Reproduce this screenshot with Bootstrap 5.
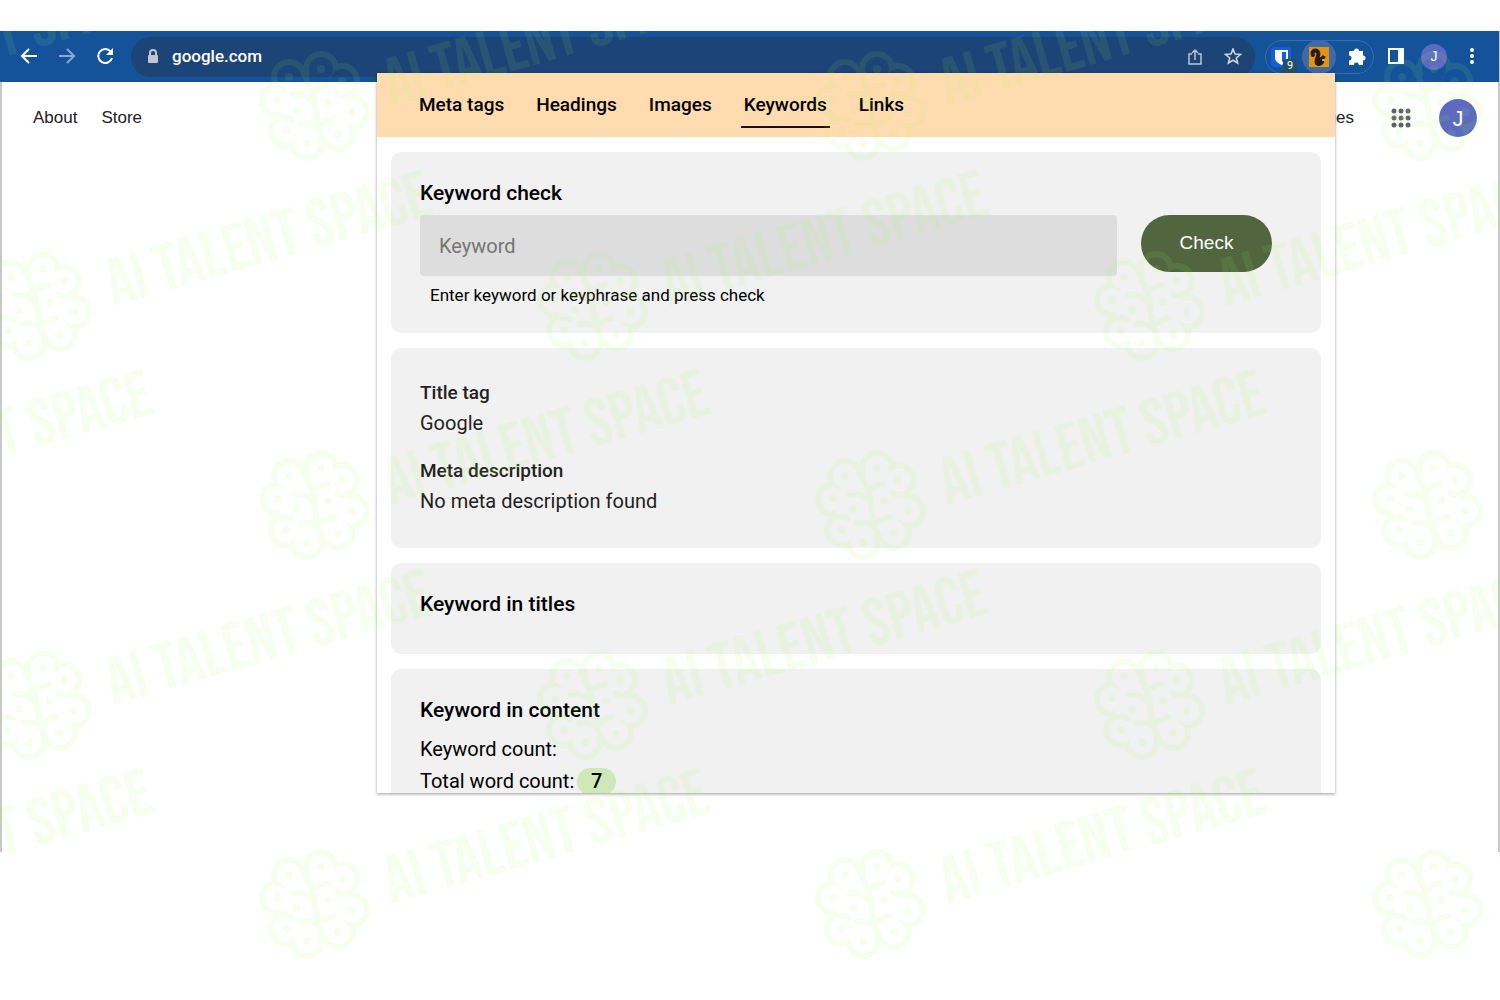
<!DOCTYPE html>
<html lang="en">
<head>
<meta charset="utf-8">
<meta name="viewport" content="width=device-width, initial-scale=1">
<title>Google</title>
<link rel="stylesheet" href="https://cdn.jsdelivr.net/npm/bootstrap@5.3.0/dist/css/bootstrap.min.css">
<style>
body{font-family:Roboto,"Liberation Sans",sans-serif;background:#fff;color:#000;overflow-x:hidden}
a{text-decoration:none;color:inherit}
.stage{padding-top:31px;min-height:100vh}
.browser{min-height:821px;border-left:2px solid #c8c8c8;border-right:2px solid #c8c8c8}
.toolbar{height:51px;margin:0 -1px 0 -2px;padding:0 14px 0 16px;background:#145399;color:#fff}
.tool{width:26px;height:26px;padding:0;border:0;background:none;color:inherit;display:inline-flex;align-items:center;justify-content:center;flex-shrink:0}
.tool-dim{opacity:.5}
.omnibox{height:40px;background:#1c4476;border-radius:20px;margin-left:13px;padding:0 9px 0 13px}
.omni-actions{gap:12px}
.address{background:none;border:0;outline:0;color:#fff;font-size:17px;font-weight:500;min-width:0;padding:0 0 0 10px}
.ext-group{height:34px;border:1px solid #3c6ca8;border-radius:17px;padding:0 3px 0 2px;margin:0 9px 0 10px}
.ext-active{width:34px;height:34px;background:#4169a4;border-radius:50%}
.ext-count{left:15px;top:15px;width:14px;height:13px;background:#24505f;border-radius:2px;font-size:11px;line-height:13px}
.user-small,.user-large{font-family:"Liberation Sans",Arial,sans-serif}
.user-small{border-radius:50%;background:#5c6bc0;font-size:14px}
.user-large{width:38px;height:38px;border-radius:50%;border:0;background:#5c6bc0;color:#fff;font-size:22px}
.site-nav{font-family:"Liberation Sans",Arial,sans-serif;font-size:17px;color:#222;padding:17px 21px 0 31px}
.apps-btn{margin:0 25px 0 34px}
.popup-panel{right:165px;top:73px;width:958px;max-width:80vw;height:720px;overflow:hidden;background:#fff;box-shadow:0 1px 3px #0006}
.tabs-bar{background:#ffdbb0;height:64px;padding:14px 39px 0}
.tab-list{gap:26px}
.tab-item{font-size:19px;font-weight:500;line-height:36px;padding:0 3px 3px;border-bottom:2px solid transparent}
.tab-item.active{border-color:#1d0d00}
.panel-body{padding:15px 14px}
.panel-box{background:#f1f1f1;border-radius:10px;padding:26px 29px;margin-bottom:15px}
.panel-box h2{font-size:21px;font-weight:500;line-height:30px;margin:0}
.titles-box{padding-bottom:35px}
.meta-box{padding:30px 29px 32px;font-size:20px;line-height:30px;color:#222}
.meta-box dl,.meta-box dd{margin:0}
.meta-box dt{font-size:19px;font-weight:500}
.meta-box dd+dt{margin-top:18px}
.field-row{margin-top:7px}
.keyword-field{height:61px;background:#ddd;border:0;border-radius:4px;padding:0 19px;font-size:20px}
.keyword-field::placeholder{color:#757575}
.check-btn{width:131px;height:57px;background:#51663f;color:#fff;border:0;border-radius:29px;font-family:"Liberation Sans",Arial,sans-serif;font-size:19px;margin-right:20px}
.hint{font-size:17px;line-height:24px;padding:7px 10px 0}
.count-line{font-size:20px;line-height:32px}
.count-pill{background:#cfe8b7;border-radius:14px;width:39px;height:27px;line-height:27px;font-weight:500;margin-left:3px}
.watermark{left:0;top:31px;width:100%;height:969px;pointer-events:none;color:#a5ff50;opacity:.09}
.watermark text{font-family:"Bebas Neue","Liberation Sans",sans-serif;font-size:67px}
</style>
</head>
<body>
<div class="stage position-relative">
 <div class="browser">
  <header class="toolbar d-flex align-items-center">
   <div class="d-flex gap-2 align-items-center">
    <button class="tool" aria-label="Back"><svg width="18" height="18" viewBox="0 0 18 18" fill="none" stroke="currentColor" stroke-width="2"><path d="M17 8H2M9 1L2 8l7 7"/></svg></button>
    <button class="tool tool-dim ms-1" aria-label="Forward"><svg width="18" height="18" viewBox="0 0 18 18" fill="none" stroke="currentColor" stroke-width="2"><path d="M1 8h15M9 1l7 7-7 7"/></svg></button>
    <button class="tool ms-1" aria-label="Reload"><svg width="18" height="18" viewBox="0 0 18 18" fill="none" stroke="currentColor" stroke-width="2"><path d="M15 4a7 7 0 1 0 1 6"/><path d="M17 0v7h-7z" fill="currentColor" stroke="none"/></svg></button>
   </div>
   <div class="omnibox d-flex align-items-center flex-grow-1">
    <svg width="18" height="18" viewBox="0 0 18 18"><rect x="4" y="7" width="10" height="8" rx="1" fill="#c0c7d2"/><path d="M6 8V5a3 3 0 0 1 6 0v3" fill="none" stroke="#c0c7d2" stroke-width="2"/></svg>
    <input class="address flex-grow-1" aria-label="Address" value="google.com">
    <div class="omni-actions d-flex">
     <button class="tool" aria-label="Share"><svg width="16" height="18" viewBox="0 0 16 18" fill="none" stroke="#b9c5d6" stroke-width="1.500"><path d="M5 6H2v10h12V6h-3M8 12V2M5 5l3-3 3 3"/></svg></button>
     <button class="tool" aria-label="Bookmark"><svg width="18" height="18" viewBox="0 0 18 18" fill="none" stroke="#cbd3df" stroke-width="1.600"><path d="M9 1l2 5 5.500.4-4.200 3.600L13.600 15 9 12.200 4.400 15l1.300-5L1.500 6.400 7 6z"/></svg></button>
    </div>
   </div>
   <div class="ext-group d-flex align-items-center gap-2">
    <button class="tool position-relative" aria-label="Password manager"><svg width="20" height="20" viewBox="0 0 20 20"><rect width="20" height="20" rx="3" fill="#175ddc"/><path d="M4 3h13v8c0 3-3 5-6.500 7C7 16 4 14 4 11z" fill="#fff"/><path d="M11 5h4v6c0 2-2 3-4 4z" fill="#175ddc"/></svg><span class="ext-count position-absolute">9</span></button>
    <button class="tool ext-active" aria-label="SEO extension"><svg width="20" height="20" viewBox="0 0 20 20"><path fill="#e0940f" d="M0 0h20v20H0z"/><path d="M4 8C2 4 7 2 9 5c2 4-3 7-1 11" fill="none" stroke="#2b1b08" stroke-width="4" stroke-linecap="round"/><path d="M7 14c1-3 3-4 5-4l2-2 1 1c2 0 2 2 0 3v3c0 2-3 4-6 4-2 0-3-3-2-5z" fill="#2b1b08"/><circle cx="14" cy="13" r="1" fill="#ddd"/></svg></button>
    <button class="tool" aria-label="Extensions"><svg width="20" height="20" viewBox="0 0 20 20" fill="#fff"><path d="M3 4h4a2.500 2.500 0 1 1 5 0h4v4.500a2.500 2.500 0 1 1 0 5V18h-4.200a2.500 2.500 0 0 0-5 0H2v-4.500a2.500 2.500 0 0 0 0-5V5z"/></svg></button>
   </div>
   <div class="d-flex align-items-center gap-2">
    <button class="tool" aria-label="Side panel"><svg width="18" height="18" viewBox="0 0 18 18"><path fill="#fff" fill-rule="evenodd" d="M1 0h16v16H1zM3 2v12h8V2z"/></svg></button>
    <button class="tool user-small ms-1" aria-label="Profile">J</button>
    <button class="tool ms-1" aria-label="Menu"><svg width="4" height="18" viewBox="0 0 4 18" fill="#fff"><circle cx="2" cy="2" r="2"/><circle cx="2" cy="8" r="2"/><circle cx="2" cy="14" r="2"/></svg></button>
   </div>
  </header>
  <nav class="site-nav d-flex align-items-center">
   <a href="#">About</a><a href="#" class="ms-4">Store</a>
   <a href="#" class="ms-auto">Images</a>
   <button class="tool apps-btn" aria-label="Google apps"><svg width="20" height="20" viewBox="0 0 20 20" fill="#5f6368"><g id="dots"><circle cx="3" cy="3" r="2.500"/><circle cx="10" cy="3" r="2.500"/><circle cx="17" cy="3" r="2.500"/></g><use href="#dots" y="7"/><use href="#dots" y="14"/></svg></button>
   <button class="user-large p-0" aria-label="Account">J</button>
  </nav>
 </div>
</div>

<section class="popup-panel position-absolute">
 <nav class="tabs-bar">
  <div class="tab-list d-flex">
   <a href="#" class="tab-item">Meta tags</a><a href="#" class="tab-item">Headings</a><a href="#" class="tab-item">Images</a><a href="#" class="tab-item active">Keywords</a><a href="#" class="tab-item">Links</a>
  </div>
 </nav>
 <div class="panel-body">
  <form class="panel-box">
   <h2><label for="keyword">Keyword check</label></h2>
   <div class="field-row d-flex gap-4 align-items-start">
    <input id="keyword" class="keyword-field flex-grow-1" placeholder="Keyword">
    <button type="button" class="check-btn">Check</button>
   </div>
   <div class="hint">Enter keyword or keyphrase and press check</div>
  </form>
  <section class="panel-box meta-box">
   <dl><dt>Title tag</dt><dd>Google</dd><dt>Meta description</dt><dd>No meta description found</dd></dl>
  </section>
  <section class="panel-box titles-box"><h2>Keyword in titles</h2></section>
  <section class="panel-box">
   <h2 class="mb-2">Keyword in content</h2>
   <div class="count-line">Keyword count:</div>
   <div class="count-line d-flex align-items-center">Total word count:<span class="count-pill text-center">7</span></div>
  </section>
 </div>
</section>

<svg class="watermark position-absolute" aria-hidden="true" fill="currentColor">
 <defs>
  <mask id="lobes" maskUnits="userSpaceOnUse" x="-60" y="-60" width="120" height="120">
   <g fill="#fff"><circle cx="-25" cy="-29" r="18"/><circle cx="7" cy="-37" r="18"/><circle cx="28" cy="-25" r="18"/><circle cx="-37" cy="-6" r="18"/><circle cx="38" cy="6" r="18"/><circle cx="-28" cy="25" r="18"/><circle cx="-7" cy="37" r="18"/><circle cx="24" cy="28" r="18"/></g>
   <g fill="#000"><ellipse rx="34" ry="31"/><circle cx="-25" cy="-29" r="12"/><circle cx="7" cy="-37" r="12"/><circle cx="28" cy="-25" r="12"/><circle cx="-37" cy="-6" r="12"/><circle cx="38" cy="6" r="12"/><circle cx="-28" cy="25" r="12"/><circle cx="-7" cy="37" r="12"/><circle cx="24" cy="28" r="12"/></g>
  </mask>
  <g id="stamp">
   <rect x="-60" y="-60" width="120" height="120" mask="url(#lobes)"/>
   <path d="M-9-36C-9-22-1-16 0-6C2 4 2 14 5 22C8 28 8 32 9 37M-21-11Q-9-13-2-4M-2-13Q2-19 13-21M-13 18Q-1 16 5 23M5 20Q12 13 20 12M-30 12Q-25 11-22 14M30-10Q26-10 23-12" fill="none" stroke="currentColor" stroke-width="6" stroke-linecap="round"/>
   <circle cx="-25" cy="-29" r="4"/><circle cx="7" cy="-37" r="4"/><circle cx="28" cy="-25" r="4"/><circle cx="-37" cy="-6" r="4"/><circle cx="-17" cy="4" r="4"/><circle cx="14" cy="-4" r="4"/><circle cx="38" cy="6" r="4"/><circle cx="-28" cy="25" r="4"/><circle cx="-7" cy="37" r="4"/><circle cx="24" cy="28" r="4"/>
   <text transform="translate(77 0) rotate(-16)">AI TALENT SPACE</text>
  </g>
  <g id="stamps"><use href="#stamp" x="-243" y="75"/><use href="#stamp" x="314" y="75"/><use href="#stamp" x="870" y="75"/><use href="#stamp" x="1427" y="75"/></g>
  <g id="stamps-shifted"><use href="#stamp" x="36" y="275"/><use href="#stamp" x="592" y="275"/><use href="#stamp" x="1149" y="275"/></g>
 </defs>
 <use href="#stamps"/><use href="#stamps" y="399"/><use href="#stamps" y="798"/>
 <use href="#stamps-shifted"/><use href="#stamps-shifted" y="399"/>
</svg>
<script src="https://cdn.jsdelivr.net/npm/bootstrap@5.3.0/dist/js/bootstrap.bundle.min.js"></script>
</body>
</html>
